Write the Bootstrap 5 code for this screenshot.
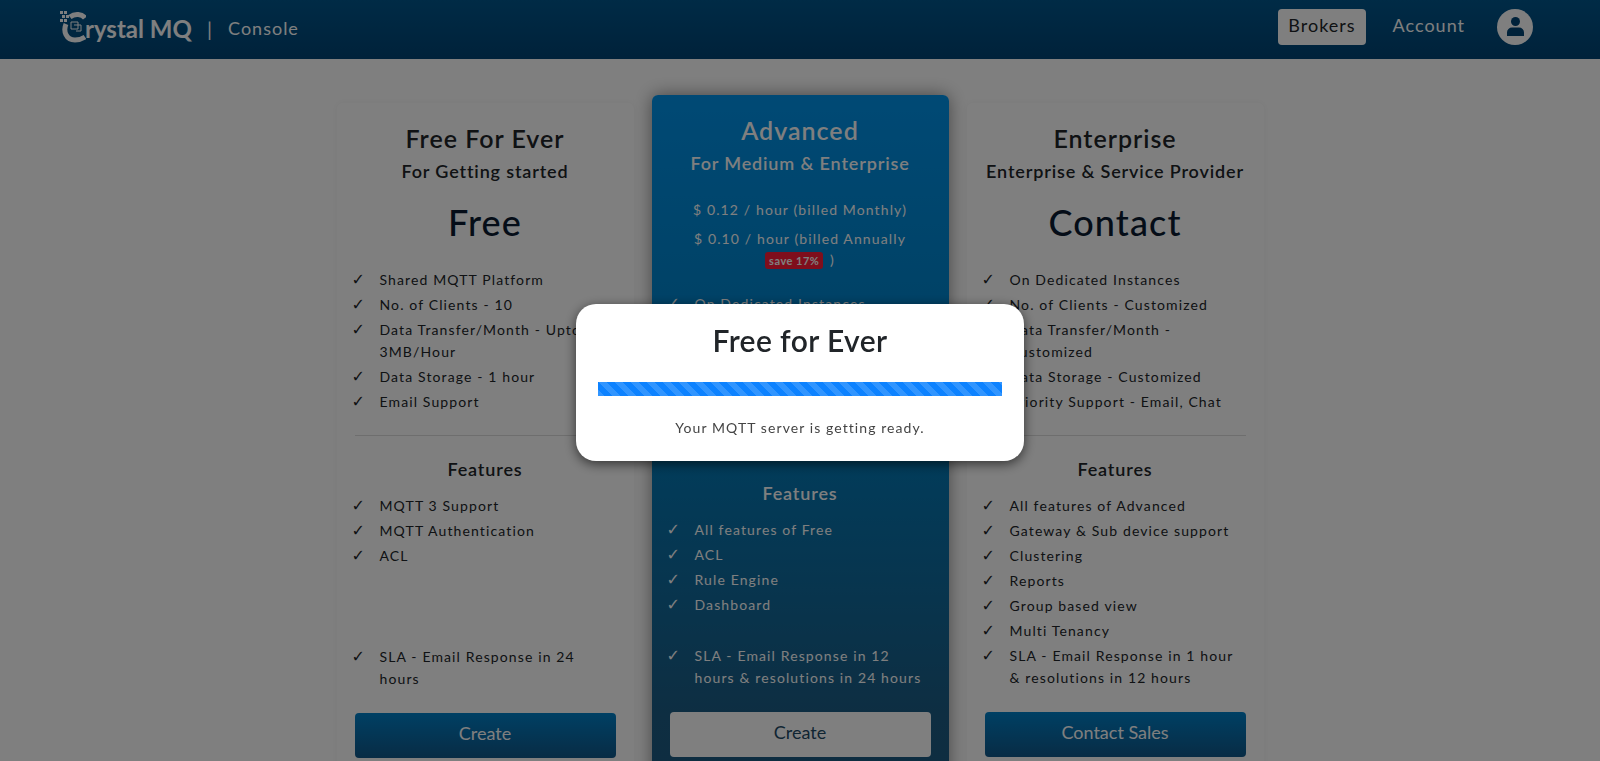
<!DOCTYPE html>
<html lang="en">
<head>
    <meta charset="UTF-8">
    <meta name="viewport" content="width=device-width, initial-scale=1.0">
    <link href="https://cdn.jsdelivr.net/npm/bootstrap@5.3.3/dist/css/bootstrap.min.css" rel="stylesheet">
    <script src="https://cdn.jsdelivr.net/npm/bootstrap@5.3.3/dist/js/bootstrap.bundle.min.js"></script>
    <title>Crystal MQ Console</title>
    <style>
        html, body { height: 100%; }
        body { font-family: Lato, "Liberation Sans", sans-serif; background: #fff; overflow: hidden; color: #212529; letter-spacing: 1.12px; }
        .top-bar { height: 59px; background: linear-gradient(180deg, #00568c, #004475); padding: 0 67px 6px 60px; }
        .brand-text { font-size: 24px; font-weight: 700; color: #fff; line-height: 1; margin-left: -1px; margin-top: 4px; letter-spacing: 0; }
        .brand-sep { color: #fff; font-size: 20px; margin: 4px 15px 0 15px; }
        .brand-sub { color: #fff; font-size: 18px; letter-spacing: 1px; margin-top: 4px; }
        .top-link { font-size: 18px; letter-spacing: 1px; color: #fff; padding: 0 10px; height: 36px; line-height: 32px; border-radius: 4px; text-decoration: none; }
        .top-link.current { background: #fff; color: #212529; margin-right: 17px; }
        .user-btn { width: 36px; height: 36px; border-radius: 50%; background: #fff; margin-left: 22px; }
        .plans { gap: 18px; padding-top: 36px; height: 702px; }
        .plan-box { width: 297px; padding: 19px 18px; flex: none; box-shadow: 0 0 8px rgba(0,0,0,.05); background: #fff; height: 720px; margin-top: 8px; border-radius: 6px; }
        .plan-box.featured { background: linear-gradient(180deg, #0093ea 0%, #007cbc 45%, #1c5c84 85%, #1c5a80 100%); color: #fff; margin-top: 0; box-shadow: 0 0 18px rgba(0,0,0,.45); height: 730px; }
        .plan-name { font-size: 25px; font-weight: 600; line-height: 32px; margin: 0 0 1px; text-align: center; letter-spacing: 1px; }
        .plan-for { font-size: 18px; font-weight: 600; line-height: 32px; margin: 0; text-align: center; letter-spacing: .85px; }
        .plan-price { font-size: 36px; font-weight: 500; line-height: 44px; margin: 13px 0 23px; text-align: center; color: #0a1a30; }
        .price-line { font-size: 14px; line-height: 21px; text-align: center; margin: 0 0 8px; }
        .save-tag { background: #ff1c38; color: #fff; font-size: 11px; font-weight: 700; padding: 2px 4px; border-radius: 3px; letter-spacing: .5px; margin-right: 2px; white-space: nowrap; }
        .feat-list { list-style: none; padding: 0; margin: 0; font-size: 14px; line-height: 22px; }
        .feat-list li { padding: 1.5px 0 1.5px 25px; position: relative; }
        .feat-list li::before { content: "\2713"; position: absolute; left: -3px; font-family: "DejaVu Sans", sans-serif; font-size: 16px; font-weight: 700; }
        .feat-title { font-size: 18px; font-weight: 600; line-height: 24px; text-align: center; margin: 0 0 12px; letter-spacing: .85px; }
        .feat-rule { border-top: 1px solid #ddd; margin: 21px 0 21px; opacity: 1; }
        .sla-gap { margin-top: 76px; }
        .plan-btn { display: block; width: 100%; height: 45px; border: 0; border-radius: 4px; padding: 0 0 4px; font-size: 18px; background: linear-gradient(180deg, #0080c8, #10588a); color: #fff; margin-top: 22px; letter-spacing: 0; }
        .featured .plan-btn { background: #fff; color: #1e4a66; margin-top: 22px; }
        .featured .price-box { margin: 20px 0 20px; }
        .featured .sla-list { margin-top: 26px; }
        .dim-layer { position: fixed; inset: 0; background: rgba(0,0,0,.5); }
        .ready-box { position: fixed; left: 576px; top: 304px; width: 448px; height: 157px; background: #fff; border-radius: 20px; box-shadow: 0 3px 12px rgba(0,0,0,.6); padding: 18px 22px 0; text-align: center; }
        .ready-title { font-size: 30px; font-weight: 600; line-height: 36px; margin: 0 0 24px; letter-spacing: .4px; }
        .ready-bar { height: 14px; border-radius: 0; background: #e9ecef; }
        .ready-bar .progress-bar { background-color: #0d82ff; }
        .ready-note { font-size: 14px; color: #444; margin: 21px 0 0; letter-spacing: 1.08px; }
    </style>
</head>

<body>
    <nav class="top-bar d-flex align-items-center justify-content-between">
        <div class="d-flex align-items-center">
            <svg width="26" height="34" viewBox="0 0 26 34" aria-hidden="true">
                <g fill="#fff">
                    <rect x="0" y="1" width="3" height="3"/><rect x="4" y="1" width="3" height="3"/><rect x="2" y="5" width="3" height="3"/><rect x="6" y="5" width="3" height="3"/><rect x="0" y="9" width="3" height="3"/><rect x="4" y="9" width="3" height="3"/>
                </g>
                <path d="M25 8C22 4 15 3 10 7M6 14C3 21 6 30 15 30C19 30 22 29 25 27" fill="none" stroke="#fff" stroke-width="5"/>
                <path d="M11 12h7v7h-7zM14 15h7v6h-5" fill="none" stroke="#fff" stroke-width="1"/>
            </svg>
            <span class="brand-text">rystal MQ</span>
            <span class="brand-sep">|</span>
            <span class="brand-sub">Console</span>
        </div>
        <div class="d-flex align-items-center">
            <a class="top-link current" href="#">Brokers</a>
            <a class="top-link" href="#">Account</a>
            <span class="user-btn d-flex align-items-center justify-content-center">
                <svg width="17" height="19" viewBox="0 0 17 19" aria-hidden="true"><circle cx="8.5" cy="4.5" r="4.5" fill="#004475"/><path d="M0 19v-3.500a5 5 0 0 1 5-5h7a5 5 0 0 1 5 5v3.500z" fill="#004475"/></svg>
            </span>
        </div>
    </nav>

    <main class="plans d-flex justify-content-center align-items-start">
        <section class="plan-box">
            <h2 class="plan-name">Free For Ever</h2>
            <h3 class="plan-for">For Getting started</h3>
            <p class="plan-price">Free</p>
            <ul class="feat-list">
                <li>Shared MQTT Platform</li>
                <li>No. of Clients - 10</li>
                <li>Data Transfer/Month - Upto 3MB/Hour</li>
                <li>Data Storage - 1 hour</li>
                <li>Email Support</li>
            </ul>
            <div class="feat-rule"></div>
            <h4 class="feat-title">Features</h4>
            <ul class="feat-list">
                <li>MQTT 3 Support</li>
                <li>MQTT Authentication</li>
                <li>ACL</li>
            </ul>
            <ul class="feat-list sla-gap">
                <li>SLA - Email Response in 24 hours</li>
            </ul>
            <button class="plan-btn" type="button">Create</button>
        </section>

        <section class="plan-box featured">
            <h2 class="plan-name">Advanced</h2>
            <h3 class="plan-for">For Medium &amp; Enterprise</h3>
            <div class="price-box">
                <p class="price-line">$ 0.12 / hour (billed Monthly)</p>
                <p class="price-line">$ 0.10 / hour (billed Annually <span class="save-tag">save 17%</span> )</p>
            </div>
            <ul class="feat-list">
                <li>On Dedicated Instances</li>
                <li>No. of Clients - 100</li>
                <li>Data Transfer/Month - Upto 10MB/Hour</li>
                <li>Data Storage - 1 day</li>
                <li>Email Support</li>
            </ul>
            <div class="feat-rule"></div>
            <h4 class="feat-title">Features</h4>
            <ul class="feat-list">
                <li>All features of Free</li>
                <li>ACL</li>
                <li>Rule Engine</li>
                <li>Dashboard</li>
            </ul>
            <ul class="feat-list sla-list">
                <li>SLA - Email Response in 12 hours &amp; resolutions in 24 hours</li>
            </ul>
            <button class="plan-btn" type="button">Create</button>
        </section>

        <section class="plan-box">
            <h2 class="plan-name">Enterprise</h2>
            <h3 class="plan-for">Enterprise &amp; Service Provider</h3>
            <p class="plan-price">Contact</p>
            <ul class="feat-list">
                <li>On Dedicated Instances</li>
                <li>No. of Clients - Customized</li>
                <li>Data Transfer/Month - Customized</li>
                <li>Data Storage - Customized</li>
                <li>Priority Support - Email, Chat</li>
            </ul>
            <div class="feat-rule"></div>
            <h4 class="feat-title">Features</h4>
            <ul class="feat-list">
                <li>All features of Advanced</li>
                <li>Gateway &amp; Sub device support</li>
                <li>Clustering</li>
                <li>Reports</li>
                <li>Group based view</li>
                <li>Multi Tenancy</li>
                <li>SLA - Email Response in 1 hour &amp; resolutions in 12 hours</li>
            </ul>
            <button class="plan-btn" type="button">Contact Sales</button>
        </section>
    </main>

    <div class="dim-layer"></div>
    <div class="ready-box">
        <h2 class="ready-title">Free for Ever</h2>
        <div class="progress ready-bar">
            <div class="progress-bar progress-bar-striped w-100"></div>
        </div>
        <p class="ready-note">Your MQTT server is getting ready.</p>
    </div>
</body>

</html>
